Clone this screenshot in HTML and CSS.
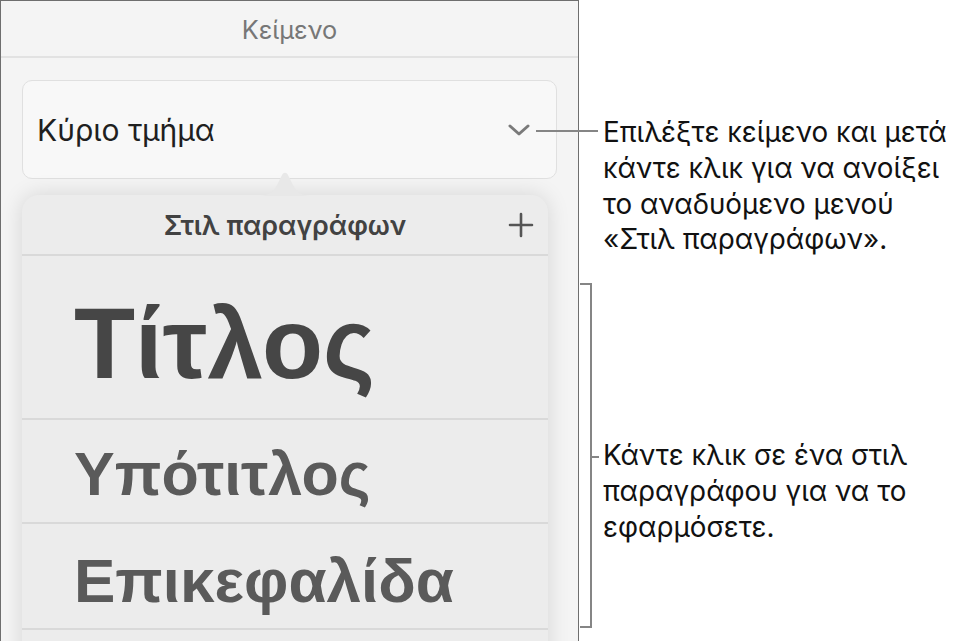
FILE: index.html
```html
<!DOCTYPE html>
<html lang="el">
<head>
<meta charset="utf-8">
<title>Κείμενο</title>
<link rel="stylesheet" href="styles.css">
</head>
<body>
<div class="page">
  <section class="frame">
    <header class="frame-header">Κείμενο</header>
    <div class="frame-body">
      <div class="dropdown">
        <span class="dropdown-label">Κύριο τμήμα</span>
        <svg class="chevron" width="22" height="12" viewBox="0 0 22 12"><polyline points="2,2 11,10 20,2" fill="none" stroke="#7a7a7a" stroke-width="3" stroke-linecap="round" stroke-linejoin="round"/></svg>
      </div>
      <div class="popover">
        <svg class="popover-arrow" width="52" height="26" viewBox="0 0 52 26"><path d="M0 26 C10 26 14 22 18 15 L23 5 C24.5 2 27.5 2 29 5 L34 15 C38 22 42 26 52 26 Z" fill="#e8e8e8"/></svg>
        <div class="popover-header">
          <span>Στιλ παραγράφων</span>
          <svg class="plus" width="26" height="26" viewBox="0 0 26 26"><path d="M13 2 V24 M2 13 H24" stroke="#555" stroke-width="2.6" stroke-linecap="round"/></svg>
        </div>
        <div class="style-row style-title">Τίτλος</div>
        <div class="style-row style-subtitle">Υπότιτλος</div>
        <div class="style-row style-heading">Επικεφαλίδα</div>
        <div class="style-row style-empty"></div>
      </div>
    </div>
  </section>
  <aside class="notes">
    <p class="note note-first">Επιλέξτε κείμενο και μετά<br>κάντε κλικ για να ανοίξει<br>το αναδυόμενο μενού<br>«Στιλ παραγράφων».</p>
    <p class="note note-second">Κάντε κλικ σε ένα στιλ<br>παραγράφου για να το<br>εφαρμόσετε.</p>
  </aside>
  <div class="leader leader-first"></div>
  <div class="bracket"></div>
  <div class="leader leader-second"></div>
</div>
</body>
</html>
```

FILE: styles.css
```css
html, body {
  margin: 0;
  padding: 0;
  background: #ffffff;
}
body {
  width: 956px;
  height: 641px;
  overflow: hidden;
  font-family: Inter, "Liberation Sans", Arial, sans-serif;
}
.page {
  position: relative;
  display: flex;
  width: 956px;
  height: 641px;
}
.frame {
  width: 579px;
  height: 641px;
  box-sizing: border-box;
  flex: none;
  border: 1px solid #6e6e6e;
  border-bottom: none;
  background: #f4f4f4;
  overflow: hidden;
}
.frame-header {
  height: 54px;
  border-bottom: 2px solid #e2e2e2;
  display: flex;
  align-items: center;
  justify-content: center;
  font-size: 25.3px;
  color: #777777;
  padding-top: 1px;
}
.frame-body {
  padding: 22px 21px 0 21px;
}
.dropdown {
  height: 97px;
  border: 1px solid #e0e0e0;
  border-radius: 10px;
  background: #f8f8f8;
  display: flex;
  align-items: center;
  justify-content: space-between;
  padding: 0 26px 0 14px;
}
.dropdown-label {
  font-size: 30px;
  color: #1f1f1f;
}
.chevron {
  display: block;
}
.popover {
  position: relative;
  margin-top: 16px;
  margin-right: 9px;
  background: #ececec;
  border-radius: 17px 17px 0 0;
  box-shadow: 0 0 22px rgba(0, 0, 0, 0.13);
}
.popover-arrow {
  position: absolute;
  top: -25px;
  left: 50%;
  margin-left: -26px;
  display: block;
}
.popover-header {
  position: relative;
  height: 59px;
  display: flex;
  align-items: center;
  justify-content: center;
  font-size: 26.8px;
  font-weight: 600;
  color: #424242;
  border-bottom: 2px solid #d9d9d9;
}
.plus {
  position: absolute;
  right: 14px;
  top: 17px;
}
.style-row {
  border-bottom: 2px solid #d9d9d9;
  padding-left: 52px;
  font-family: "Liberation Sans", Arial, sans-serif;
  font-weight: bold;
  line-height: 1;
  box-sizing: border-box;
  white-space: nowrap;
}
.style-title {
  height: 164px;
  padding-top: 37px;
  font-size: 100px;
  color: #464646;
}
.style-subtitle {
  height: 104px;
  padding-top: 24px;
  font-size: 61px;
  color: #5a5a5a;
}
.style-heading {
  height: 106px;
  padding-top: 26px;
  font-size: 62px;
  color: #5a5a5a;
}
.style-empty {
  height: 40px;
  border-bottom: none;
}
.notes {
  flex: 1;
  padding: 115px 0 0 24px;
}
.note {
  margin: 0;
  font-size: 27.8px;
  line-height: 35.8px;
  color: #111111;
  white-space: nowrap;
}
.note-second {
  margin-top: 180px;
}
.leader {
  position: absolute;
  height: 2px;
  background: #858585;
}
.leader-first {
  left: 536px;
  top: 130px;
  width: 62px;
}
.leader-second {
  left: 591px;
  top: 456px;
  width: 8px;
}
.bracket {
  position: absolute;
  left: 580px;
  top: 283px;
  width: 10px;
  height: 341px;
  border: 2px solid #858585;
  border-left: none;
}
```
